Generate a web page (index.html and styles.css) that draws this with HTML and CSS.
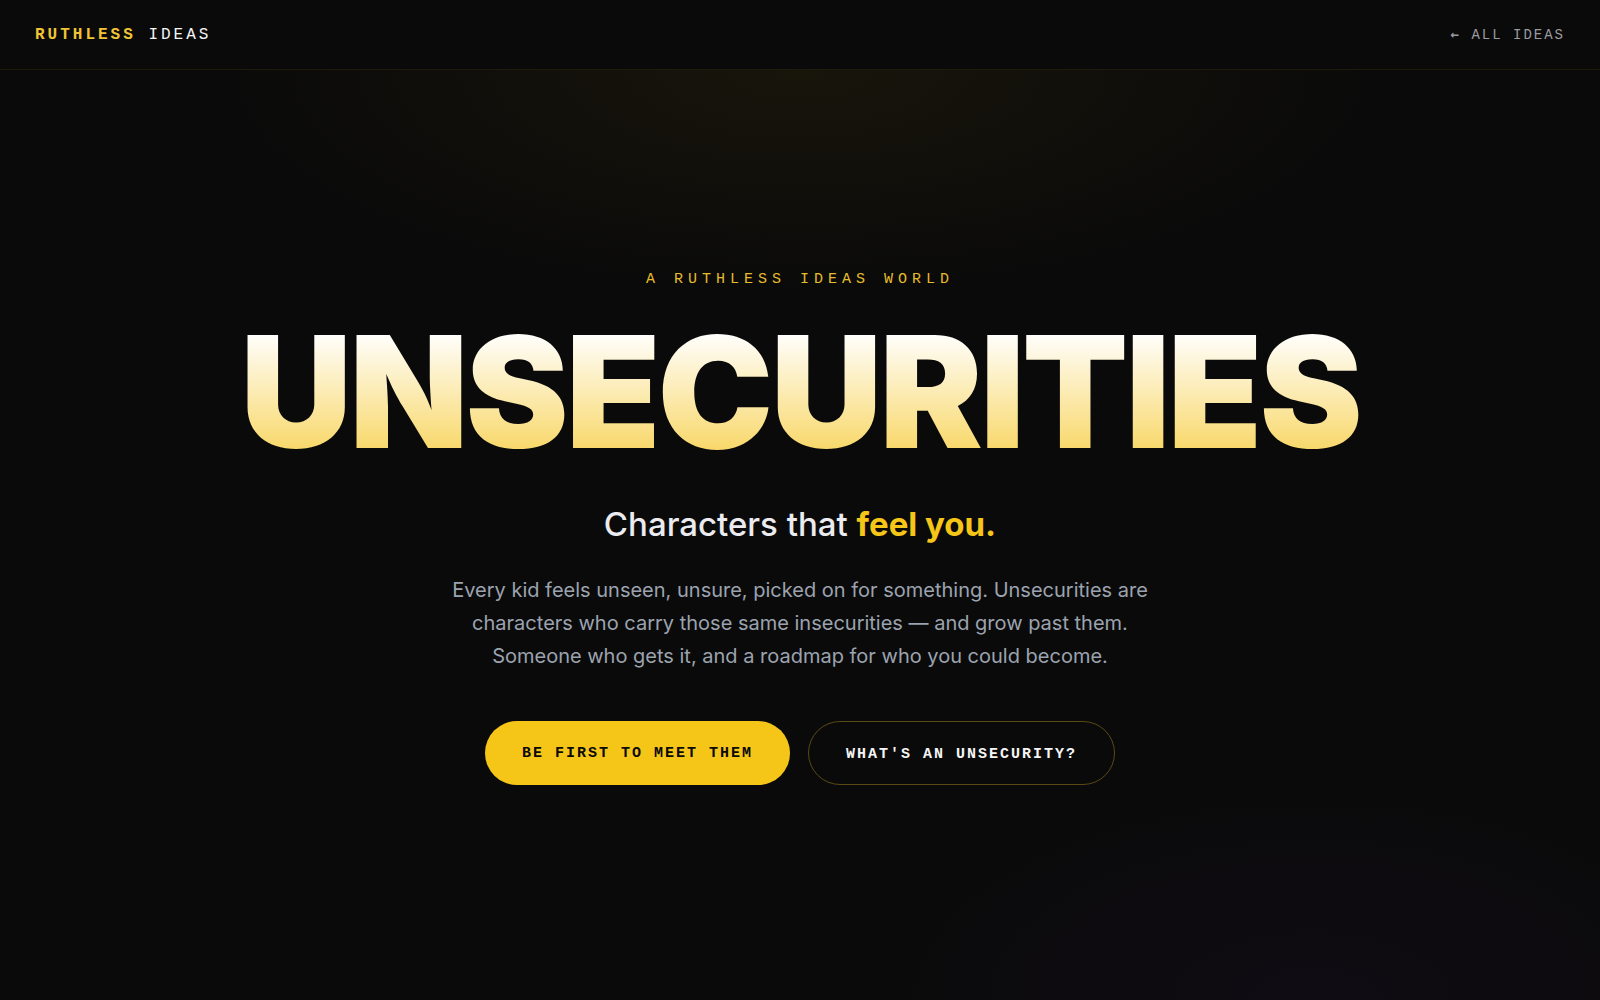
FILE: index.html
```html
<!DOCTYPE html>
<html lang="en">
<head>
<meta charset="utf-8">
<meta name="viewport" content="width=device-width, initial-scale=1">
<title>Unsecurities</title>
<link rel="stylesheet" href="styles.css">
</head>
<body>
<header class="nav">
  <a class="brand" href="#"><b>RUTHLESS</b> IDEAS</a>
  <a class="back" href="#"><span class="arrow">←</span> ALL IDEAS</a>
</header>
<main class="hero">
  <p class="eyebrow">A RUTHLESS IDEAS WORLD</p>
  <h1 class="title">UNSECURITIES</h1>
  <p class="tagline">Characters that <strong>feel you.</strong></p>
  <p class="lede">Every kid feels unseen, unsure, picked on for something. Unsecurities are characters who carry those same insecurities — and grow past them. Someone who gets it, and a roadmap for who you could become.</p>
  <div class="actions">
    <a class="btn btn-primary" href="#">BE FIRST TO MEET THEM</a>
    <a class="btn btn-ghost" href="#">WHAT'S AN UNSECURITY?</a>
  </div>
</main>
</body>
</html>
```
FILE: styles.css
```css
* { box-sizing: border-box; margin: 0; }
body {
  min-height: 100vh;
  display: flex;
  flex-direction: column;
  background: #0a0a0a;
  color: #f5f5f5;
  font-family: Inter, sans-serif;
}
a { color: inherit; text-decoration: none; }
.nav {
  display: flex;
  justify-content: space-between;
  align-items: center;
  height: 70px;
  padding: 0 35px;
  border-bottom: 1px solid #1f1b0b;
  font-family: "Liberation Mono", monospace;
}
.brand { font-size: 16px; letter-spacing: 3px; }
.brand b { color: #f0c535; }
.back { font-size: 14px; letter-spacing: 2px; color: #9a9ba0; }
.arrow { font-family: "DejaVu Sans Mono", monospace; font-weight: 700; }
.hero {
  flex: 1;
  display: flex;
  flex-direction: column;
  align-items: center;
  justify-content: center;
  padding: 32px 32px 50px;
  text-align: center;
  background:
    radial-gradient(ellipse 52% 34% at 50% 0%, rgba(245, 197, 24, 0.06), transparent 70%),
    radial-gradient(ellipse 40% 34% at 82% 100%, rgba(120, 40, 200, 0.05), transparent 70%);
}
.eyebrow {
  font-family: "Liberation Mono", monospace;
  font-size: 15px;
  line-height: 24px;
  letter-spacing: 5px;
  color: #e6bb2c;
}
.title {
  margin-top: 28px;
  padding: 0 8px;
  font-size: 155px;
  font-weight: 900;
  line-height: 144px;
  letter-spacing: -3px;
  color: transparent;
  background: linear-gradient(180deg, #fff 8%, #f8d662 95%);
  background-clip: text;
}
.tagline { margin-top: 38px; font-size: 33px; font-weight: 500; line-height: 44px; color: #ebebf0; }
.tagline strong { color: #f5c518; font-weight: 700; }
.lede { max-width: 720px; margin-top: 28px; font-size: 20px; line-height: 33px; color: #9ca3af; }
.actions { display: flex; flex-wrap: wrap; justify-content: center; gap: 18px; margin-top: 48px; }
.btn {
  padding: 22px 37px 18px;
  border-radius: 32px;
  font: bold 15px/22px "Liberation Mono", monospace;
  letter-spacing: 2px;
}
.btn-primary { background: #f5c518; color: #0a0a0a; }
.btn-ghost { border: 1px solid #5a4a14; }
```
